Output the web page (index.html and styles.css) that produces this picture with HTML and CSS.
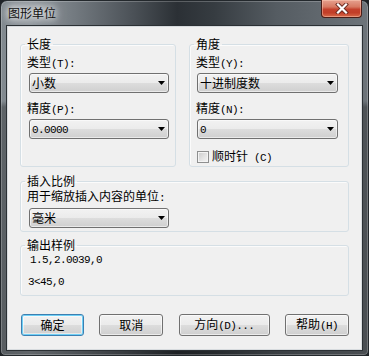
FILE: index.html
```html
<!DOCTYPE html>
<html lang="zh-CN">
<head>
<meta charset="utf-8">
<title>图形单位</title>
<link rel="stylesheet" href="styles.css">
</head>
<body>
<div class="window">
  <div class="titlebar">
    <span class="title">图形单位</span>
    <button class="close" aria-label="关闭">
      <svg width="14" height="11" viewBox="0 0 14 11">
        <path d="M3 1.5 L11 9.5 M11 1.5 L3 9.5" stroke="#6a2a20" stroke-width="4" stroke-linecap="square" fill="none"/>
        <path d="M3 1.5 L11 9.5 M11 1.5 L3 9.5" stroke="#ffffff" stroke-width="2.2" stroke-linecap="square" fill="none"/>
      </svg>
    </button>
  </div>
  <div class="client">
    <div class="toprow">
      <fieldset class="group g-len">
        <legend>长度</legend>
        <div class="label first">类型<span class="a">(T):</span></div>
        <div class="select"><span>小数</span><svg class="arrow" width="7" height="4" viewBox="0 0 7 4"><path d="M0 0h7L3.5 4z"/></svg></div>
        <div class="label second">精度<span class="a">(P):</span></div>
        <div class="select"><span class="a">0.0000</span><svg class="arrow" width="7" height="4" viewBox="0 0 7 4"><path d="M0 0h7L3.5 4z"/></svg></div>
      </fieldset>
      <fieldset class="group g-ang">
        <legend>角度</legend>
        <div class="label first">类型<span class="a">(Y):</span></div>
        <div class="select"><span>十进制度数</span><svg class="arrow" width="7" height="4" viewBox="0 0 7 4"><path d="M0 0h7L3.5 4z"/></svg></div>
        <div class="label second">精度<span class="a">(N):</span></div>
        <div class="select"><span class="a">0</span><svg class="arrow" width="7" height="4" viewBox="0 0 7 4"><path d="M0 0h7L3.5 4z"/></svg></div>
        <div class="check"><span class="box"></span><span class="check-text">顺时针<span class="a"> (C)</span></span></div>
      </fieldset>
    </div>
    <fieldset class="group g-ins">
      <legend>插入比例</legend>
      <div class="label">用于缩放插入内容的单位<span class="a">:</span></div>
      <div class="select"><span>毫米</span><svg class="arrow" width="7" height="4" viewBox="0 0 7 4"><path d="M0 0h7L3.5 4z"/></svg></div>
    </fieldset>
    <fieldset class="group g-out">
      <legend>输出样例</legend>
      <div class="sample s1 a">1.5,2.0039,0</div>
      <div class="sample s2 a">3&lt;45,0</div>
    </fieldset>
    <div class="buttons">
      <button class="btn default w-ok">确定</button>
      <button class="btn w-std">取消</button>
      <button class="btn w-dir">方向<span class="a">(D)...</span></button>
      <button class="btn w-std">帮助<span class="a">(H)</span></button>
    </div>
  </div>
</div>
</body>
</html>
```
FILE: styles.css
```css
* { box-sizing: border-box; }
html, body { margin: 0; padding: 0; }
body {
  width: 369px;
  height: 356px;
  overflow: hidden;
  background: #1e2226;
  font: 12px/14px "Liberation Sans", "Noto Sans CJK SC", sans-serif;
  color: #000;
}
.a {
  font-family: "Liberation Mono", monospace;
  font-size: 11px;
  letter-spacing: -0.6px;
}
.window {
  width: 369px;
  height: 356px;
  border: 1px solid #23282c;
  border-radius: 7px 7px 5px 5px;
  padding: 0 7px 6px 7px;
  display: flex;
  flex-direction: column;
  background:
    linear-gradient(180deg, rgba(0,0,0,0) 0, rgba(0,0,0,0) 100px, rgba(0,0,0,0.28) 106px, rgba(0,0,0,0.32) 100%),
    linear-gradient(90deg, #80888e 0%, #8f969c 8%, #737a80 20%, #4b5157 36%, #2b3035 48%, #363c41 58%, #555c62 75%, #6d747a 100%);
  box-shadow: inset 0 0 0 1px rgba(255,255,255,0.22);
}
.titlebar {
  height: 26px;
  display: flex;
  align-items: flex-start;
  justify-content: space-between;
}
.title {
  margin-top: 6px;
  color: #111;
  text-shadow: 0 0 6px #fff, 0 0 10px rgba(255,255,255,0.9), 0 0 14px rgba(255,255,255,0.7);
}
.close {
  margin: -1px -1px 0 0;
  width: 41px;
  height: 18px;
  padding: 0;
  border: 1px solid #4a1d17;
  border-top: none;
  border-radius: 0 0 4px 4px;
  background: linear-gradient(180deg, #e6a08e 0%, #d77a63 40%, #c4412c 55%, #c23e28 75%, #d86a4a 100%);
  box-shadow: inset 0 0 0 1px rgba(255,210,190,0.45);
  display: flex;
  align-items: center;
  justify-content: center;
}
.close svg { display: block; }
.client {
  flex: 1;
  background: #f0f0f0;
  padding: 10px 12px 0 12px;
  box-shadow: 0 0 0 1px #d7dbde, 0 0 0 2px #2b3034;
}
.toprow {
  display: flex;
  justify-content: space-between;
  align-items: stretch;
}
.group {
  margin: 0;
  min-width: 0;
  border: 1px solid #d5dfe5;
  border-radius: 3px;
  padding: 0 6px;
  box-shadow: inset 1px 1px 0 #fbfbfb;
}
.group legend {
  padding: 1px 2px 0 2px;
  margin-left: -2px;
  line-height: 14px;
}
.g-len { width: 156px; padding-top: 3px; }
.g-ang { width: 160px; padding-top: 3px; padding-bottom: 2px; }
.label { height: 14px; padding-top: 1px; line-height: 14px; white-space: nowrap; box-sizing: content-box; }
.label.second { margin-top: 8px; }
.select {
  margin-top: 3px;
  margin-left: 2px;
  width: 140px;
  height: 20px;
  border: 1px solid #707070;
  border-radius: 3px;
  background: linear-gradient(180deg, #f2f2f2 0%, #ebebeb 50%, #dddddd 50%, #cfcfcf 100%);
  box-shadow: inset 0 0 0 1px rgba(255,255,255,0.55);
  display: flex;
  align-items: center;
  justify-content: space-between;
  padding: 1px 3px 0 2px;
  white-space: nowrap;
}
.g-ang .select { margin-left: 1px; width: 141px; }
.arrow { display: block; fill: #000; margin-top: -1px; }
.check {
  margin-top: 11px;
  margin-left: 1px;
  height: 14px;
  display: flex;
  align-items: center;
}
.box {
  width: 12px;
  height: 12px;
  border: 1px solid #8e8f8f;
  background: linear-gradient(135deg, #cbcbcb 0%, #e6e6e6 60%, #f4f4f4 100%);
  box-shadow: inset 0 0 0 1px #f4f4f4;
}
.check-text { margin-left: 3px; padding-top: 1px; }
.g-ins {
  margin-top: 7px;
  padding-top: 0;
  padding-bottom: 3px;
}
.g-ins .select { margin-top: 4px; }
.g-out {
  margin-top: 6px;
  padding-bottom: 6px;
}
.sample { height: 14px; line-height: 14px; }
.s1 { padding-left: 3px; }
.s2 { margin-top: 8px; padding-left: 1px; }
.buttons {
  margin-top: 18px;
  margin-left: 1px;
  display: flex;
  justify-content: space-between;
}
.btn {
  height: 22px;
  padding: 1px 0 0 0;
  border: 1px solid #707070;
  border-radius: 3px;
  background: linear-gradient(180deg, #f2f2f2 0%, #ebebeb 50%, #dddddd 50%, #cfcfcf 100%);
  box-shadow: inset 0 0 0 1px rgba(255,255,255,0.6);
  font: inherit;
  color: #000;
  white-space: nowrap;
}
.btn.default {
  border-color: #3c7fb1;
  box-shadow: inset 0 0 0 1px #6fd0f6, inset 0 0 0 2px rgba(255,255,255,0.5);
}
.w-ok { width: 63px; }
.w-std { width: 64px; }
.w-dir { width: 91px; }
```
